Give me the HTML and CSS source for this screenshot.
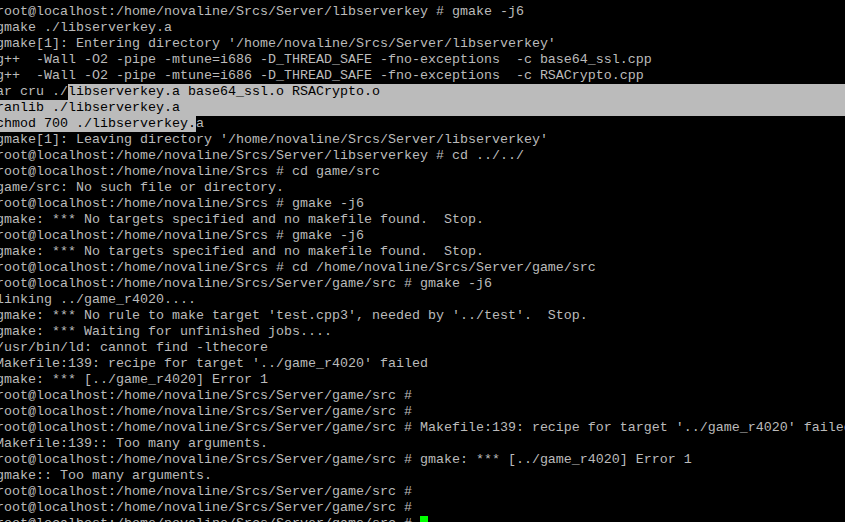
FILE: index.html
```html
<!DOCTYPE html>
<html>
<head>
<meta charset="utf-8">
<link rel="stylesheet" href="styles.css">
</head>
<body>
<div class="term">
<div class="ln">root@localhost:/home/novaline/Srcs/Server/libserverkey # gmake -j6</div>
<div class="ln">gmake ./libserverkey.a</div>
<div class="ln">gmake[1]: Entering directory '/home/novaline/Srcs/Server/libserverkey'</div>
<div class="ln">g++  -Wall -O2 -pipe -mtune=i686 -D_THREAD_SAFE -fno-exceptions  -c base64_ssl.cpp</div>
<div class="ln">g++  -Wall -O2 -pipe -mtune=i686 -D_THREAD_SAFE -fno-exceptions  -c RSACrypto.cpp</div>
<div class="ln"><span>ar cru ./</span><span class="sel fill">libserverkey.a base64_ssl.o RSACrypto.o</span></div>
<div class="ln sel">ranlib ./libserverkey.a</div>
<div class="ln"><span class="sel">chmod 700 ./libserverkey.</span><span>a</span></div>
<div class="ln">gmake[1]: Leaving directory '/home/novaline/Srcs/Server/libserverkey'</div>
<div class="ln">root@localhost:/home/novaline/Srcs/Server/libserverkey # cd ../../</div>
<div class="ln">root@localhost:/home/novaline/Srcs # cd game/src</div>
<div class="ln">game/src: No such file or directory.</div>
<div class="ln">root@localhost:/home/novaline/Srcs # gmake -j6</div>
<div class="ln">gmake: *** No targets specified and no makefile found.  Stop.</div>
<div class="ln">root@localhost:/home/novaline/Srcs # gmake -j6</div>
<div class="ln">gmake: *** No targets specified and no makefile found.  Stop.</div>
<div class="ln">root@localhost:/home/novaline/Srcs # cd /home/novaline/Srcs/Server/game/src</div>
<div class="ln">root@localhost:/home/novaline/Srcs/Server/game/src # gmake -j6</div>
<div class="ln">linking ../game_r4020....</div>
<div class="ln">gmake: *** No rule to make target 'test.cpp3', needed by '../test'.  Stop.</div>
<div class="ln">gmake: *** Waiting for unfinished jobs....</div>
<div class="ln">/usr/bin/ld: cannot find -lthecore</div>
<div class="ln">Makefile:139: recipe for target '../game_r4020' failed</div>
<div class="ln">gmake: *** [../game_r4020] Error 1</div>
<div class="ln">root@localhost:/home/novaline/Srcs/Server/game/src #</div>
<div class="ln">root@localhost:/home/novaline/Srcs/Server/game/src #</div>
<div class="ln">root@localhost:/home/novaline/Srcs/Server/game/src # Makefile:139: recipe for target '../game_r4020' failed</div>
<div class="ln">Makefile:139:: Too many arguments.</div>
<div class="ln">root@localhost:/home/novaline/Srcs/Server/game/src # gmake: *** [../game_r4020] Error 1</div>
<div class="ln">gmake:: Too many arguments.</div>
<div class="ln">root@localhost:/home/novaline/Srcs/Server/game/src #</div>
<div class="ln">root@localhost:/home/novaline/Srcs/Server/game/src #</div>
<div class="ln"><span>root@localhost:/home/novaline/Srcs/Server/game/src # </span><span class="cursor"></span></div>
</div>
</body>
</html>
```

FILE: styles.css
```css
html, body {
  margin: 0;
  padding: 0;
  background: #000;
  overflow: hidden;
  height: 100%;
}

.term {
  margin: 4px 0 0 -4px;
  font-family: "Liberation Mono", "Courier New", monospace;
  font-size: 13.333px;
  line-height: 16px;
  color: #bbbbbb;
}

.ln {
  display: flex;
  height: 16px;
  white-space: pre;
}

.sel {
  background: #bbbbbb;
  color: #000;
}

.fill {
  flex: 1;
}

.cursor {
  width: 8px;
  height: 16px;
  background: #00ff00;
}
```
